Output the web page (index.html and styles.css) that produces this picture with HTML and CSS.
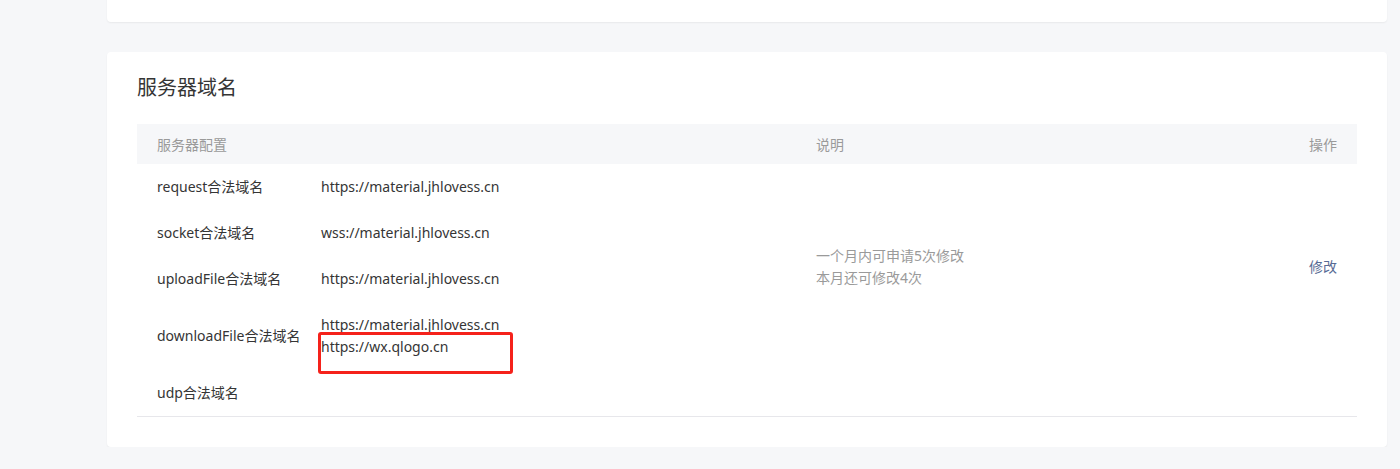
FILE: index.html
```html
<!DOCTYPE html>
<html lang="zh-CN">
<head>
    <meta charset="UTF-8">
    <meta name="viewport" content="width=device-width, initial-scale=1.0">
    <title>服务器域名</title>
    <link rel="stylesheet" href="styles.css">
</head>
<body>
    <div class="pagina">
        <div class="tarjeta tarjeta-previa"></div>

        <div class="tarjeta">
            <h2 class="titulo">服务器域名</h2>
            <table class="tabla">
                <colgroup>
                    <col class="col-nombre">
                    <col class="col-valor">
                    <col>
                    <col class="col-accion">
                </colgroup>
                <thead>
                    <tr>
                        <th colspan="2">服务器配置</th>
                        <th>说明</th>
                        <th class="accion">操作</th>
                    </tr>
                </thead>
                <tbody>
                    <tr>
                        <td>request合法域名</td>
                        <td>https://material.jhlovess.cn</td>
                        <td rowspan="4" class="nota">一个月内可申请5次修改<br>本月还可修改4次</td>
                        <td rowspan="4" class="accion"><a href="#" class="enlace">修改</a></td>
                    </tr>
                    <tr>
                        <td>socket合法域名</td>
                        <td>wss://material.jhlovess.cn</td>
                    </tr>
                    <tr>
                        <td>uploadFile合法域名</td>
                        <td>https://material.jhlovess.cn</td>
                    </tr>
                    <tr>
                        <td>downloadFile合法域名</td>
                        <td class="multi">
                            https://material.jhlovess.cn<br>
                            <span class="marcado">https://wx.qlogo.cn<span class="recuadro"></span></span>
                        </td>
                    </tr>
                    <tr class="ultima">
                        <td>udp合法域名</td>
                        <td></td>
                        <td></td>
                        <td></td>
                    </tr>
                </tbody>
            </table>
        </div>
    </div>
</body>
</html>
```

FILE: styles.css
```css
body {
    margin: 0;
    padding: 0;
    background-color: #f6f7f9;
    font-family: "Noto Sans", "Noto Sans CJK SC", sans-serif;
    color: #353535;
    font-size: 14px;
}

.pagina {
    padding-left: 107px;
    width: 1280px;
}

.tarjeta {
    background-color: #ffffff;
    border-radius: 4px;
    box-shadow: 0 1px 2px rgba(0, 0, 0, 0.06);
    padding: 20px 30px 30px;
}

.tarjeta-previa {
    height: 50px;
    padding: 0;
    margin-top: -28px;
    margin-bottom: 30px;
}

.titulo {
    margin: 0 0 20px;
    font-size: 20px;
    font-weight: normal;
    line-height: 32px;
    color: #353535;
}

.tabla {
    width: 100%;
    border-collapse: collapse;
    table-layout: fixed;
}

.col-nombre {
    width: 164px;
}

.col-valor {
    width: 495px;
}

.col-accion {
    width: 120px;
}

.tabla th {
    background-color: #f6f7f9;
    color: #9a9a9a;
    font-weight: normal;
    text-align: left;
    height: 40px;
    padding: 0 20px;
}

.tabla td {
    padding: 12px 20px;
    line-height: 22px;
    vertical-align: middle;
    white-space: nowrap;
}

.tabla .accion {
    text-align: right;
}

.ultima td {
    border-bottom: 1px solid #e7e7eb;
}

.nota {
    color: #9a9a9a;
}

.enlace {
    color: #576b95;
    text-decoration: none;
}

.marcado {
    position: relative;
}

.recuadro {
    position: absolute;
    left: -3px;
    top: -5px;
    width: 189px;
    height: 36px;
    border: 3px solid #f5221b;
    border-radius: 3px;
}
```
